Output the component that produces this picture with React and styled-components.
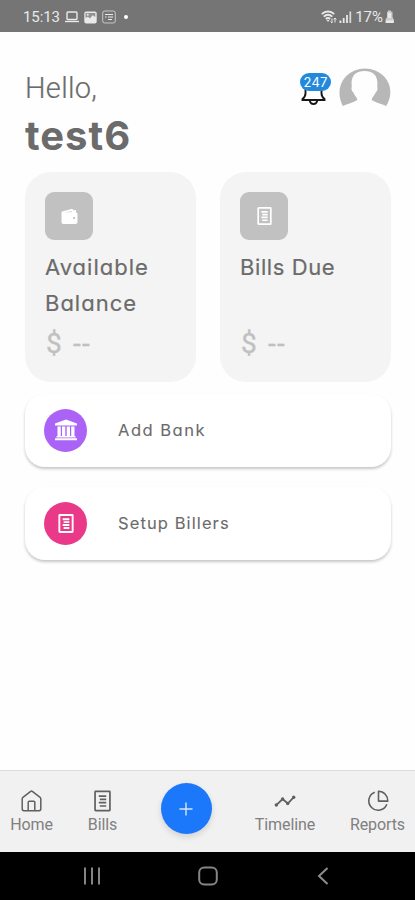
import styled, { createGlobalStyle } from "styled-components";

const colors = {
  status: "#757575",
  text: "#6b6b6b",
  muted: "#c0c0c0",
  card: "#f4f4f4",
  tile: "#c1c1c1",
  nav: "#f1f1f1",
  blue: "#1b78fb",
  badge: "#2389dc",
  purple: "#ab62f7",
  pink: "#e93988",
};

const GlobalStyle = createGlobalStyle`
  * {
    box-sizing: border-box;
  }
  body {
    margin: 0;
    background: #fefefe;
    font-family: Inter, "Open Sans", sans-serif;
    font-feature-settings: "cv11";
    color: ${colors.text};
  }
  svg {
    display: block;
    flex: none;
  }
`;

const Screen = styled.div`
  display: flex;
  flex-direction: column;
  width: 415px;
  height: 900px;
  overflow: hidden;
`;

const StatusBar = styled.header`
  display: flex;
  justify-content: space-between;
  align-items: center;
  height: 32px;
  padding: 2px 21px 0 23px;
  background: ${colors.status};
  color: #e9e9e9;
  font-family: Roboto, sans-serif;
`;

const StatusGroup = styled.div`
  display: flex;
  align-items: center;
  gap: ${(props) => props.$gap}px;
`;

const StatusText = styled.span`
  font-size: 15px;
  line-height: 18px;
  letter-spacing: ${(props) => props.$spacing}px;
`;

const StatusDot = styled.span`
  width: 4px;
  height: 4px;
  margin-left: 3px;
  border-radius: 50%;
  background: #fff;
`;

const Main = styled.main`
  flex: 1;
  padding: 35px 24px 0 25px;
`;

const Header = styled.div`
  display: flex;
  justify-content: space-between;
  height: 105px;
`;

const Greeting = styled.p`
  margin: 0;
  font-family: Roboto, sans-serif;
  font-size: 29px;
  font-weight: 300;
  line-height: 42px;
  letter-spacing: 0.3px;
  -webkit-text-stroke: 0.2px currentColor;
`;

const UserName = styled.h1`
  margin: 0;
  font-size: 40px;
  font-weight: 700;
  line-height: 54px;
  letter-spacing: 1px;
`;

const HeaderActions = styled.div`
  display: flex;
  align-items: flex-start;
  gap: 8px;
`;

const Bell = styled.div`
  position: relative;
  width: 31px;
  padding: 11px 0 0;
`;

const Badge = styled.span`
  position: absolute;
  top: 6px;
  left: 0;
  width: 31px;
  height: 18px;
  border-radius: 9px;
  background: ${colors.badge};
  color: #fff;
  font-size: 13px;
  font-weight: 400;
  line-height: 18px;
  letter-spacing: 0.2px;
  text-align: center;
`;

const Cards = styled.section`
  display: grid;
  grid-template-columns: 171px 171px;
  justify-content: space-between;
`;

const Card = styled.article`
  display: flex;
  flex-direction: column;
  height: 210px;
  padding: 20px;
  border-radius: 26px;
  background: ${colors.card};
`;

const Tile = styled.div`
  display: grid;
  place-items: center;
  width: 48px;
  height: 48px;
  border-radius: 9px;
  background: ${colors.tile};
  color: #fff;
`;

const CardTitle = styled.h2`
  flex: 1;
  margin: 9px 0 0;
  font-size: 22px;
  font-weight: 400;
  line-height: 36px;
  letter-spacing: ${(props) => props.$spacing}px;
  white-space: pre-line;
  -webkit-text-stroke: 0.2px currentColor;
`;

const Amount = styled.p`
  margin: 0 0 2px 1px;
  color: ${colors.muted};
  font-family: Roboto, sans-serif;
  font-size: 28px;
  line-height: 32px;
  letter-spacing: 1.2px;
  word-spacing: 2px;
  -webkit-text-stroke: 0.3px currentColor;
`;

const Actions = styled.section`
  display: flex;
  flex-direction: column;
  gap: 20px;
  margin-top: 12px;
`;

const ActionRow = styled.button`
  display: flex;
  align-items: center;
  gap: 31px;
  height: 73px;
  padding: 0 19px 1px;
  border: 0;
  border-radius: 20px;
  background: #fff;
  box-shadow: 0 2px 3px rgba(0, 0, 0, 0.22);
  color: ${colors.text};
  font: inherit;
  font-size: 16.5px;
  font-feature-settings: "cv11";
  letter-spacing: ${(props) => props.$spacing}px;
  -webkit-text-stroke: 0.1px currentColor;
`;

const Circle = styled.span`
  display: grid;
  place-items: center;
  width: 43px;
  height: 43px;
  border-radius: 50%;
  background: ${(props) => props.$color};
  color: #fff;
`;

const TabBar = styled.nav`
  display: grid;
  grid-template-columns: 63px 79px 88px 110px 75px;
  height: 82px;
  border-top: 1px solid #dcdcdc;
  background: ${colors.nav};
`;

const Tab = styled.div`
  display: flex;
  flex-direction: column;
  align-items: center;
  gap: 2px;
  padding-top: 19px;
  color: #606060;
`;

const TabLabel = styled.span`
  color: #808080;
  font-family: Roboto, sans-serif;
  font-size: 16px;
  line-height: 22px;
  letter-spacing: -0.1px;
`;

const AddButton = styled.button`
  display: grid;
  place-items: center;
  align-self: start;
  justify-self: center;
  width: 51px;
  height: 51px;
  margin-top: 12px;
  padding: 0;
  border: 0;
  border-radius: 50%;
  background: ${colors.blue};
  box-shadow: 0 3px 6px rgba(0, 0, 0, 0.13);
`;

const SystemBar = styled.footer`
  display: grid;
  grid-template-columns: 149px 83px 148px;
  place-items: center;
  height: 48px;
  padding-left: 17px;
  background: #000;
`;

const LaptopIcon = () => (
  <svg width="14" height="12" viewBox="0 0 14 12" fill="none" stroke="currentColor" strokeWidth="1.4">
    <rect x="2" y="1" width="10" height="7.5" rx="1" />
    <path d="M0 10.5h14" />
  </svg>
);

const PictureIcon = () => (
  <svg width="13" height="13" viewBox="0 0 13 13">
    <rect x="0.3" y="0.5" width="12.4" height="12" rx="2" fill="currentColor" />
    <path d="M1.5 6.8V2h9.8v4L8.6 4.2 6 7.5 4 5.8z" fill="#929292" />
    <circle cx="3.8" cy="3.7" r="1" fill="currentColor" />
  </svg>
);

const NewsIcon = () => (
  <svg width="14" height="14" viewBox="0 0 14 14" fill="none" stroke="currentColor">
    <rect x="0.7" y="1" width="12.6" height="12" rx="2" opacity="0.7" />
    <path d="M3 4.5h8M6 7h5M6 9.5h4M3 7h1.5" />
  </svg>
);

const WifiIcon = () => (
  <svg width="16" height="14" viewBox="0 0 16 14" fill="none" stroke="currentColor" strokeWidth="1.8">
    <path d="M0.8 4.2c3.5-3.6 8.9-3.6 12.4 0M2.7 6.7c2.6-2.4 6-2.4 8.6 0M4.8 9c1.4-1.2 3-1.2 4.4 0" />
    <path d="M5.5 10h3L7 12z" fill="currentColor" stroke="none" />
    <path d="M11 13V8.5M9.6 11.5 11 13M14 8v4.5M12.8 9.5 14 8l1.3 1.5" strokeWidth="1" />
  </svg>
);

const SignalIcon = () => (
  <svg width="13" height="13" viewBox="0 0 13 13" fill="currentColor">
    <path d="M0.5 9.5h1.8V12H0.5zM3.8 7h1.8v5H3.8zM7.1 4h1.8v8H7.1z" />
    <path d="M10.4 0.5h1.8V12h-1.8z" opacity="0.85" />
  </svg>
);

const BatteryIcon = () => (
  <svg width="9" height="14" viewBox="0 0 9 14" fill="currentColor">
    <path d="M3 0.5h3v1.3h1.5V7L9 10v3H0.5v-3L2 7V1.8h1z" opacity="0.75" />
    <path d="M1 10.5h7.5V13H1zM3 3h3v5H3z" />
  </svg>
);

const BellIcon = () => (
  <svg width="27" height="30" viewBox="0 0 27 30" fill="none" stroke="#171717" strokeWidth="1.9">
    <path d="M5.5 10v5.3c0 2.5-.8 4.1-3 5.700v1h22v-1c-2.200-1.600-3-3.200-3-5.700V10" />
    <path d="M9.600 22c.4 2.600 1.700 4 3.900 4s3.500-1.400 3.900-4" />
  </svg>
);

const AvatarIcon = () => (
  <svg width="52" height="40" viewBox="0 0 52 40">
    <path
      d="M3.800 39C-1.600 28-.4 17.500 6.800 9.600 17.400-1.200 34.700-1.200 45.200 9.600 52.400 17.500 53.600 28 47.200 39c-4.700-2.400-10.400-3.100-14.600-6 .4-2.700 2.800-4.400 3.900-7.200 1.700-1.400 2.500-3.600 1.700-6.200C39.600 9.200 34.600 4 25.500 4S11.400 9.200 12.800 19.600c-.8 2.600 0 4.800 1.700 6.200 1.100 2.800 3.500 4.500 3.900 7.200-4.200 2.900-9.900 3.600-14.600 6z"
      fill="#b7b7b7"
    />
  </svg>
);

const WalletIcon = () => (
  <svg width="17" height="17" viewBox="0 0 17 17">
    <path d="M1 3.500 10.500 1c1-.2 1.600.2 1.600 1.200L15 2v2.300c1 .3 1.500.8 1.500 2v7.700c0 1.300-.7 2-2 2H2.500c-1.300 0-2-.7-2-2V4.500z" fill="#fff" />
    <path d="M3 4.200 11 3v1.200z" fill="#d8d8d8" />
    <circle cx="13" cy="10" r="1" fill="#b5b5b5" />
  </svg>
);

const BillIcon = ({ width, height, stroke = 1.6 }) => (
  <svg width={width} height={height} viewBox="0 0 16 20" fill="none" stroke="currentColor" strokeWidth={stroke}>
    <rect x="1" y="1" width="14" height="18" rx="0.5" />
    <path d="M4.500 5.500h7M5.500 8.500h6M4.500 11.500h7M5.500 14.700h6" />
  </svg>
);

const BankIcon = () => (
  <svg width="24" height="22" viewBox="0 0 24 22" fill="#fff">
    <path d="M12 0.500 23 4.500v2H1v-2zM3.500 7.500h3.300v9.500H3.500zM8 7.500h3.300v9.500H8zM12.700 7.500H16v9.500h-3.300zM17.200 7.500h3.300v9.500h-3.300zM2.500 17h19v1.500h-19zM1 19.300h22v2H1z" />
  </svg>
);

const HomeIcon = () => (
  <svg width="21" height="22" viewBox="0 0 21 22" fill="none" stroke="currentColor" strokeWidth="1.500" strokeLinejoin="round">
    <path d="M1.200 8.800c0-.6.2-1 .7-1.400L9.700 1.300a1.300 1.300 0 0 1 1.600 0l7.800 6.100c.5.4.7.8.7 1.400v10c0 1.200-.6 1.900-1.700 1.900H2.900c-1.100 0-1.700-.7-1.700-1.900z" />
    <path d="M7.200 20.500v-8.200c0-.7.3-1 1-1h4.600c.7 0 1 .3 1 1v8.200" />
  </svg>
);

const TimelineIcon = () => (
  <svg width="22" height="22" viewBox="0 0 22 22" fill="none" stroke="currentColor" strokeWidth="1.800">
    <path d="m2.300 15.200 6.300-6.200 5.200 4.500 5.800-6.200" />
    <g fill="currentColor" stroke="none">
      <circle cx="2.300" cy="15" r="1.700" />
      <circle cx="8.600" cy="9" r="1.700" />
      <circle cx="13.700" cy="13.500" r="1.700" />
      <circle cx="19.700" cy="7.300" r="1.700" />
    </g>
  </svg>
);

const PieIcon = () => (
  <svg width="22" height="22" viewBox="0 0 22 22" fill="none" stroke="currentColor" strokeWidth="1.600">
    <path d="M7.800 2.200a9.300 9.300 0 1 0 12 12" />
    <path d="M11.500 1.200v9.900h9.300a9.500 9.500 0 0 0-9.300-9.900z" strokeLinejoin="round" />
  </svg>
);

const RecentsIcon = () => (
  <svg width="18" height="18" viewBox="0 0 18 18" stroke="#858585" strokeWidth="2">
    <path d="M2 0.500v17M9 0.500v17M16 0.500v17" />
  </svg>
);

const HomeKeyIcon = () => (
  <svg width="20" height="20" viewBox="0 0 20 20" fill="none" stroke="#858585" strokeWidth="2">
    <rect x="1.200" y="1.500" width="17.600" height="17" rx="5" />
  </svg>
);

const BackIcon = () => (
  <svg width="12" height="18" viewBox="0 0 12 18" fill="none" stroke="#8c8c8c" strokeWidth="2">
    <path d="M10.500 1 2 9l8.500 8" />
  </svg>
);

export default function App() {
  return (
    <Screen>
      <GlobalStyle />
      <StatusBar>
        <StatusGroup $gap={5}>
          <StatusText $spacing={-0.1}>15:13</StatusText>
          <LaptopIcon />
          <PictureIcon />
          <NewsIcon />
          <StatusDot />
        </StatusGroup>
        <StatusGroup $gap={2}>
          <WifiIcon />
          <SignalIcon />
          <StatusText $spacing={0}>&#8202;17%</StatusText>
          <BatteryIcon />
        </StatusGroup>
      </StatusBar>

      <Main>
        <Header>
          <div>
            <Greeting>Hello,</Greeting>
            <UserName>test6</UserName>
          </div>
          <HeaderActions>
            <Bell>
              <BellIcon />
              <Badge>247</Badge>
            </Bell>
            <AvatarIcon />
          </HeaderActions>
        </Header>

        <Cards>
          <Card>
            <Tile>
              <WalletIcon />
            </Tile>
            <CardTitle $spacing={1}>{"Available\nBalance"}</CardTitle>
            <Amount>$ --</Amount>
          </Card>
          <Card>
            <Tile>
              <BillIcon width={15} height={18} stroke={1.9} />
            </Tile>
            <CardTitle $spacing={0.6}>Bills Due</CardTitle>
            <Amount>$ --</Amount>
          </Card>
        </Cards>

        <Actions>
          <ActionRow $spacing={1.5}>
            <Circle $color={colors.purple}>
              <BankIcon />
            </Circle>
            Add Bank
          </ActionRow>
          <ActionRow $spacing={1.1}>
            <Circle $color={colors.pink}>
              <BillIcon width={16} height={19} stroke={2} />
            </Circle>
            Setup Billers
          </ActionRow>
        </Actions>
      </Main>

      <TabBar>
        <Tab>
          <HomeIcon />
          <TabLabel>Home</TabLabel>
        </Tab>
        <Tab>
          <BillIcon width={17} height={22} />
          <TabLabel>Bills</TabLabel>
        </Tab>
        <AddButton>
          <svg width="14" height="14" viewBox="0 0 14 14" stroke="#d5e6ff" strokeWidth="1.400">
            <path d="M7 0.500v13M0.500 7h13" />
          </svg>
        </AddButton>
        <Tab>
          <TimelineIcon />
          <TabLabel>Timeline</TabLabel>
        </Tab>
        <Tab>
          <PieIcon />
          <TabLabel>Reports</TabLabel>
        </Tab>
      </TabBar>

      <SystemBar>
        <RecentsIcon />
        <HomeKeyIcon />
        <BackIcon />
      </SystemBar>
    </Screen>
  );
}
